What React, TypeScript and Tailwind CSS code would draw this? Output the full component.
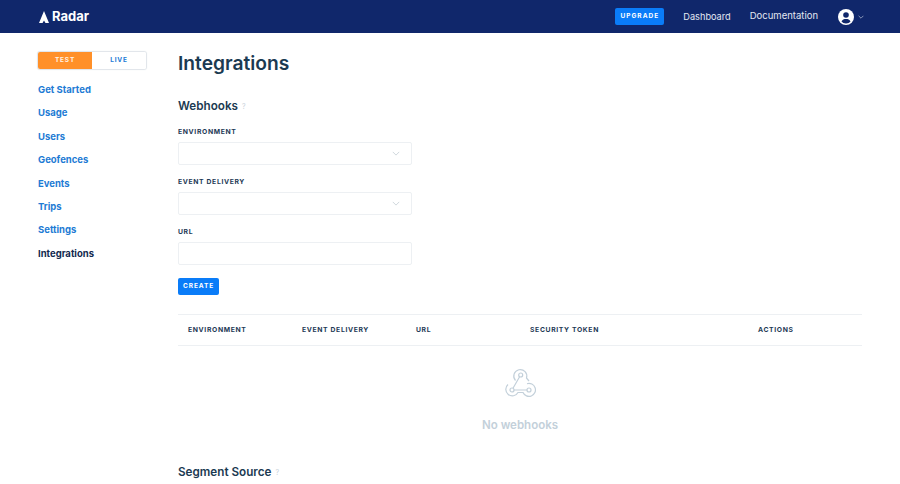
import React from "react";

const nav = ["Get Started", "Usage", "Users", "Geofences", "Events", "Trips", "Settings"];

function Chevron({ className }: { className: string }) {
  return (
    <svg viewBox="0 0 10 6" className={className} fill="none" stroke="currentColor" strokeWidth="1">
      <path d="M1 1l4 4 4-4" />
    </svg>
  );
}

function Label({ children }: { children: React.ReactNode }) {
  return <div className="text-[6.800px] leading-[10px] font-bold tracking-[0.65px] text-[#1e3a56]">{children}</div>;
}

function Field({ label, select }: { label: string; select?: boolean }) {
  return (
    <div className="flex flex-col gap-[5px]">
      <Label>{label}</Label>
      <div className="flex h-[23px] w-[234px] items-center justify-end rounded-[2px] border border-[#edf0f3] bg-white pr-[11px]">
        {select && <Chevron className="h-[5px] w-[8px] text-[#c5ced6]" />}
      </div>
    </div>
  );
}

function Hook() {
  return (
    <svg viewBox="0 0 32 30" className="h-[30px] w-[32px] text-[#c3d0da]" fill="none" stroke="currentColor" strokeWidth="1.2">
      <circle cx="16.700" cy="7" r="2" />
      <circle cx="8" cy="22" r="2" />
      <circle cx="25" cy="22" r="2" />
      <path d="M15.600 8.800L9 20.200M10 22H23" />
      <path d="M11.500 12.500A6.500 6.500 0 1 1 22.500 10L25 13" />
      <path d="M4 16.500A6.500 6.500 0 1 0 14 24.500H19A6.500 6.500 0 1 0 23 15.700" />
    </svg>
  );
}

export default function App() {
  return (
    <div className="h-[484px] w-[900px] overflow-hidden bg-white font-['Inter','Liberation_Sans',sans-serif]">
      <header className="flex h-[33px] items-center justify-between bg-[#10276b] pl-[39px] pr-[36px]">
        <div className="flex items-center gap-[3px] text-white">
          <svg viewBox="0 0 10 12" className="h-[12px] w-[10px]" fill="currentColor">
            <path d="M5 0L10 12H6.500L5 9.500 3.500 12H0z" />
          </svg>
          <span className="text-[13px] font-bold">Radar</span>
        </div>
        <div className="flex items-center">
          <div className="flex h-[17px] w-[49px] items-center justify-center rounded-[2px] bg-[#0a7cf8] text-[6.500px] font-bold tracking-[1px] text-white">UPGRADE</div>
          <span className="ml-[19px] text-[9.200px] text-[#e3e8f2]">Dashboard</span>
          <span className="ml-[19px] text-[9.500px] text-[#e3e8f2]">Documentation</span>
          <svg viewBox="0 0 16 16" className="ml-[20px] h-[16px] w-[16px]">
            <circle cx="8" cy="8" r="8" fill="#fff" />
            <circle cx="8" cy="6" r="2.800" fill="#10276b" />
            <path d="M3.500 12.500C4.500 10.500 6 10 8 10s3.500.5 4.500 2.500C11.500 13.800 10 14.500 8 14.500s-3.500-.7-4.500-2z" fill="#10276b" />
          </svg>
          <Chevron className="ml-[4px] h-[4px] w-[6px] text-[#d5dbe8]" />
        </div>
      </header>
      <div className="flex">
        <aside className="w-[178px] shrink-0 pl-[38px] pt-[19px]">
          <div className="flex h-[17px] w-[108px] overflow-hidden rounded-[2px] shadow-[0_0_1px_1px_#dfe4e9]">
            <div className="flex w-[54px] items-center justify-center bg-[#ff9029] text-[6.500px] font-bold tracking-[0.8px] text-[#fff3e6]">TEST</div>
            <div className="flex flex-1 items-center justify-center bg-white text-[6.500px] font-bold tracking-[0.8px] text-[#1c7ad6]">LIVE</div>
          </div>
          <nav className="mt-[14px] flex flex-col gap-[9.400px] text-[9.500px] font-bold leading-[14px] text-[#1e7bd4]">
            {nav.map((n) => (
              <div key={n}>{n}</div>
            ))}
            <div className="text-[#12294f]">Integrations</div>
          </nav>
        </aside>
        <main className="flex-1 pr-[38px]">
          <h1 className="mt-[17px] text-[19.200px] font-semibold leading-[27px] text-[#1b3a52]">Integrations</h1>
          <div className="mt-[20px] flex items-center gap-[4px]">
            <h2 className="text-[11.700px] font-semibold leading-[18px] text-[#1b3a52]">Webhooks</h2>
            <span className="mt-[3px] text-[7px] text-[#c9d2da]">?</span>
          </div>
          <div className="mt-[12px] flex flex-col gap-[12px]">
            <Field label="ENVIRONMENT" select />
            <Field label="EVENT DELIVERY" select />
            <Field label="URL" />
          </div>
          <div className="mt-[13px] flex h-[17px] w-[41px] items-center justify-center rounded-[2px] bg-[#0a7cf8] text-[6.500px] font-bold tracking-[0.9px] text-white">CREATE</div>
          <div className="mt-[19px] grid h-[32px] grid-cols-[114px_114px_114px_228px_1fr] items-center border-y border-[#edf0f3] pl-[10px] text-[6.800px] font-bold tracking-[0.65px] text-[#1e3a56]">
            <div>ENVIRONMENT</div>
            <div>EVENT DELIVERY</div>
            <div>URL</div>
            <div>SECURITY TOKEN</div>
            <div>ACTIONS</div>
          </div>
          <div className="mt-[22px] flex flex-col items-center">
            <Hook />
            <div className="mt-[19px] text-[11.500px] font-semibold leading-[16px] text-[#c3d0da]">No webhooks</div>
          </div>
          <div className="mt-[30px] flex items-center gap-[4px]">
            <h2 className="text-[11.700px] font-semibold leading-[18px] text-[#1b3a52]">Segment Source</h2>
            <span className="mt-[3px] text-[7px] text-[#c9d2da]">?</span>
          </div>
        </main>
      </div>
    </div>
  );
}
